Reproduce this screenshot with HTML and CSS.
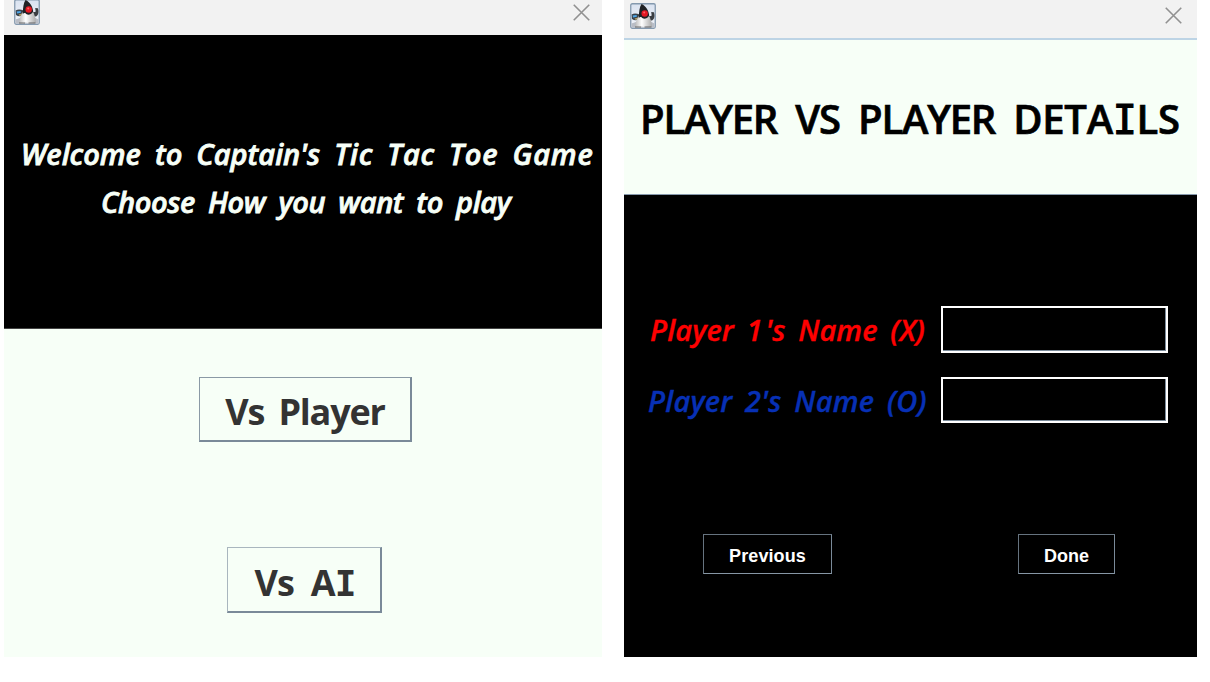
FILE: index.html
```html
<!DOCTYPE html>
<html lang="en">
<head>
<meta charset="utf-8">
<title>Captain's Tic Tac Toe</title>
<link rel="stylesheet" href="styles.css">
</head>
<body>
<svg width="0" height="0" class="defs">
  <defs>
    <linearGradient id="sky" x1="0" y1="0" x2="0" y2="1"><stop offset="0" stop-color="#d9e2f0"/><stop offset="1" stop-color="#f3f5fa"/></linearGradient>
    <linearGradient id="belly" x1="0" y1="0" x2="1" y2="0"><stop offset="0" stop-color="#b9b9b9"/><stop offset=".4" stop-color="#fff"/><stop offset="1" stop-color="#aaa"/></linearGradient>
  </defs>
  <symbol id="duke" viewBox="0 0 26 26">
    <rect x=".75" y=".75" width="24.500" height="24.500" rx="1.500" fill="url(#sky)" stroke="#8499ae" stroke-width="1.300"/>
    <path d="M1.500 24.500v-4l6-2 11-1 6 3v4z" fill="#b9bdc6"/>
    <path d="M9.500 11.500C7 10.500 4 10 1.600 11.500L2 16c2 1.500 4.500 1.500 7 .5z" fill="#39424c"/>
    <path d="M2.600 12.600l4-.5.300 1.700-3.800.6z" fill="#4ea7e8"/>
    <path d="M4.500 15.500l3.500-1-.5 2.300H5.500z" fill="#b6a266"/>
    <path d="M18 12.500c1.500.7 2.700.7 3.700 0l-.5-3.500 2.700.2c1 3 .9 6.500-1.500 8-1.500.5-3 .3-4-.5z" fill="#3b3e42"/>
    <path d="M9.500 12l9-.5c2 4 3.300 8.300 3.500 11.800-1.700 1.500-4 1-5 .2-2 .8-4.200.5-5.700 0-2 1.300-5.300 1.200-6.300-.2.300-4 2.300-8 4.500-11.300z" fill="url(#belly)"/>
    <path d="M11.500 1c4.500 2 7.300 6.500 7.700 11.500-2 3.500-6 4-7.500 2-1.200-1.300-2 .5-3 .2C9 9 9.500 4 11.500 1z" fill="#202226"/>
    <path d="M5 24h6M14.500 24h7" fill="none" stroke="#4b4b4b" stroke-width=".8"/>
    <circle cx="14.700" cy="10.500" r="3.200" fill="#e51722"/>
    <circle cx="14.200" cy="9.500" r="1" fill="#ff6168"/>
  </symbol>
  <symbol id="close" viewBox="0 0 16 16"><path d="M.7.7l14.600 14.600M15.300.7L.7 15.300" fill="none" stroke="#919191" stroke-width="1.500"/></symbol>
</svg>
<main class="desktop">
  <section class="window window-start">
    <header class="titlebar">
      <svg class="duke"><use href="#duke"/></svg>
      <svg class="close"><use href="#close"/></svg>
    </header>
    <div class="banner">
      <h1 class="welcome">Welcome to Captain's <span class="game-name">Tic Tac Toe Game</span></h1>
      <p class="choose">Choose How you want to play</p>
    </div>
    <div class="choices">
      <button class="choice choice-player">Vs Player</button>
      <button class="choice choice-ai">Vs A<span class="slab">I</span></button>
    </div>
  </section>
  <section class="window window-details">
    <header class="titlebar">
      <svg class="duke"><use href="#duke"/></svg>
      <svg class="close"><use href="#close"/></svg>
    </header>
    <h2 class="heading"><span>PLAYER VS PLAYER <span class="last-word">DETA<span class="slab">I</span>LS</span></span></h2>
    <div class="form">
      <label class="row row-one"><span class="name name-x">Player <span class="one">1</span>'s Name (X)</span><input class="field" type="text"></label>
      <label class="row row-two"><span class="name name-o">Player 2's Name (O)</span><input class="field" type="text"></label>
      <div class="actions">
        <button class="action previous">Previous</button>
        <button class="action done">Done</button>
      </div>
    </div>
  </section>
</main>
</body>
</html>
```
FILE: styles.css
```css
* { box-sizing: border-box; }
body { margin: 0; background: #fff; font-family: "Comic Sans MS", "Open Sans", sans-serif; overflow: hidden; }
.defs { display: block; }
h1, h2, p { margin: 0; }
.desktop { display: flex; gap: 22px; height: 657px; padding-left: 4px; }
.window { display: flex; flex-direction: column; }
.window-start { width: 598px; }
.window-details { width: 573px; }
.titlebar { display: flex; justify-content: space-between; flex: none; background: #f2f2f2; }
.window-start .titlebar { height: 35px; padding: 0 12px 0 10px; }
.window-details .titlebar { height: 40px; padding: 3px 15px 0 6px; border-bottom: 2px solid #bdd4e5; }
.duke { width: 26px; height: 26px; }
.window-start .duke { margin-top: -1px; }
.close { width: 17px; height: 17px; margin-top: 4px; }
.banner { height: 294px; padding-top: 94px; background: #000; color: #f7fff7; font-size: 29px; font-weight: 600; font-style: italic; line-height: 49px; white-space: nowrap; border-bottom: 1px solid #444; -webkit-text-stroke: .8px; }
.welcome { font-size: inherit; font-weight: inherit; padding-left: 17px; letter-spacing: 0; word-spacing: 6.5px; }
.game-name { letter-spacing: .8px; word-spacing: 5.8px; }
.choose { padding-left: 97px; margin-top: -1px; letter-spacing: -.4px; word-spacing: 6px; }
.choices { display: flex; flex: 1; flex-direction: column; align-items: flex-start; gap: 105px; padding-top: 48px; background: #f7fff7; }
.choice { height: 65px; padding: 4px 0 0; border: 1px solid #8a99a5; border-right: 2px solid #7a8a99; border-bottom: 2px solid #7a8a99; background: transparent; color: #333; font: 700 36px/55px "Comic Sans MS", "Open Sans", sans-serif; white-space: nowrap; }
.choice-player { width: 213px; margin-left: 195px; letter-spacing: -1.2px; word-spacing: 6px; }
.choice-ai { width: 155px; height: 66px; margin-left: 223px; padding: 6px 0 0 2px; border-left-color: #a9b6be; border-top-color: #a9b6be; letter-spacing: -.8px; word-spacing: 8px; }
.slab { font-family: "Comic Sans MS", "DejaVu Sans Mono", monospace; line-height: 1; }
.heading { display: flex; flex: none; height: 155px; padding: 0 0 0 16px; border-bottom: 1px solid #8799ac; background: #f7fff7; color: #000; font-size: 40px; font-weight: 600; letter-spacing: -1.2px; line-height: 157px; word-spacing: 9px; white-space: nowrap; -webkit-text-stroke: .7px; }
.last-word { letter-spacing: -.3px; }
.heading .slab { font-weight: 400; -webkit-text-stroke: 1.2px; }
.form { display: flex; flex: 1; flex-direction: column; background: #000; padding-top: 110px; }
.row { display: flex; align-items: center; }
.row-one { height: 49px; }
.row-two { height: 47px; margin-top: 23px; }
.name { width: 317px; padding-left: 26px; font-size: 29px; font-weight: 600; font-style: italic; word-spacing: 5px; white-space: nowrap; -webkit-text-stroke: .4px; }
.name-x { color: #f00; letter-spacing: .1px; }
.one { letter-spacing: 3px; }
.name-o { padding-left: 24px; color: #0730b5; letter-spacing: .2px; }
.field { width: 227px; height: 47px; padding: 0 8px; border: 2px solid #fff; border-radius: 0; outline: 0; box-shadow: inset -1px -1px #7a8a99; background: #000; color: #fff; font-size: 20px; }
.row-two .field { height: 46px; margin-bottom: 2px; }
.actions { display: flex; justify-content: space-between; margin-top: 110px; padding: 0 82px 0 79px; }
.action { height: 40px; padding: 4px 0 0; border: 1px solid #66737f; border-right-color: #7a8a99; border-bottom: 1px solid #8696a5; background: #000; color: #fff; font: 700 18px/30px "Liberation Sans", sans-serif; }
.previous { width: 129px; letter-spacing: .1px; }
.done { width: 97px; }
```
